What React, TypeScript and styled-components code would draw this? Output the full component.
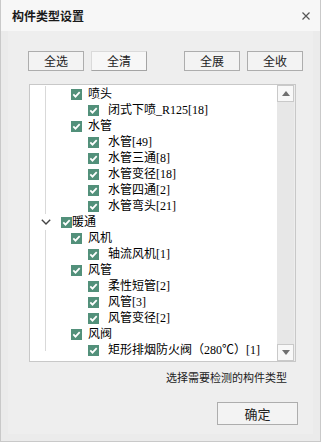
import styled, { createGlobalStyle } from 'styled-components';

interface TreeRow {
    level: 1 | 2 | 3;
    label: string;
    expander?: boolean;
    last?: boolean;
}

const rows: TreeRow[] = [
    { level: 2, label: '喷头' },
    { level: 3, label: '闭式下喷_R125[18]' },
    { level: 2, label: '水管' },
    { level: 3, label: '水管[49]' },
    { level: 3, label: '水管三通[8]' },
    { level: 3, label: '水管变径[18]' },
    { level: 3, label: '水管四通[2]' },
    { level: 3, label: '水管弯头[21]' },
    { level: 1, label: '暖通', expander: true },
    { level: 2, label: '风机' },
    { level: 3, label: '轴流风机[1]' },
    { level: 2, label: '风管' },
    { level: 3, label: '柔性短管[2]' },
    { level: 3, label: '风管[3]' },
    { level: 3, label: '风管变径[2]' },
    { level: 2, label: '风阀' },
    { level: 3, label: '矩形排烟防火阀（280℃）[1]', last: true },
];

// indent of the checkbox and gap to the label, per level
const indent = { 1: 0, 2: 10, 3: 27 };
const labelGap = { 1: 0, 2: 6, 3: 9 };

const GlobalStyle = createGlobalStyle`
    html, body {
        margin: 0;
        padding: 0;
        background: #ffffff;
    }
`;

const Window = styled.div`
    width: 321px;
    height: 442px;
    box-sizing: border-box;
    display: flex;
    flex-direction: column;
    background: #ebebeb;
    border: 1px solid #c9c9c9;
    border-top: none;
    font-family: "Noto Sans CJK SC", sans-serif;
`;

const TitleBar = styled.div`
    height: 31px;
    flex-shrink: 0;
    display: flex;
    align-items: center;
    justify-content: space-between;
    padding: 0 10px 0 11px;
    background: #f7f7f7;
`;

const Title = styled.div`
    font-size: 12px;
    font-weight: 700;
    color: #1a1a1a;
    line-height: 16px;
    margin-top: 1px;
`;

const CloseButton = styled.div`
    width: 8px;
    height: 8px;
    display: flex;
    margin-top: 1px;
`;

const Frame = styled.div`
    flex: 1;
    display: flex;
    padding: 0 7px 7px 7px;
`;

const Content = styled.div`
    flex: 1;
    display: flex;
    flex-direction: column;
    background: #eeeeee;
`;

const ButtonRow = styled.div`
    display: flex;
    margin: 20px 0 0 20px;
`;

const ButtonGroup = styled.div<{ $offset?: number }>`
    display: flex;
    gap: 7px;
    margin-left: ${p => p.$offset ?? 0}px;
`;

const ToolButton = styled.button<{ $focused?: boolean }>`
    width: 56px;
    height: 20px;
    padding: 0;
    box-sizing: border-box;
    border: 1px solid #adadad;
    border-color: ${p => p.$focused ? '#dadada #a4a4a4 #a4a4a4 #dadada' : '#adadad'};
    background: ${p => p.$focused ? '#f7f7f7' : '#f3f3f3'};
    font-family: "Noto Sans CJK SC", sans-serif;
    font-size: 12px;
    line-height: 18px;
    color: #222;
`;

const TreePanel = styled.div`
    margin: 13px 0 0 21px;
    width: 267px;
    height: 278px;
    box-sizing: border-box;
    display: flex;
    border: 1px solid #c8c8c8;
    background: #ffffff;
`;

const TreeBody = styled.div`
    flex: 1;
    padding-top: 1px;
    overflow: hidden;
`;

const Row = styled.div`
    height: 16px;
    display: flex;
    align-items: center;
    white-space: nowrap;
`;

const GuideCell = styled.div`
    width: 31px;
    height: 100%;
    flex-shrink: 0;
    display: flex;
    justify-content: center;
    align-items: center;
`;

const Rail = styled.div<{ $end?: boolean }>`
    width: 1px;
    align-self: flex-start;
    height: ${p => p.$end ? '9px' : '100%'};
    background: #d9d9d9;
`;

const Check = styled.svg<{ $level: 1 | 2 | 3 }>`
    width: 11px;
    height: 11px;
    flex-shrink: 0;
    margin-left: ${p => indent[p.$level]}px;
`;

const Label = styled.span<{ $level: 1 | 2 | 3 }>`
    margin-left: ${p => labelGap[p.$level]}px;
    font-family: "Liberation Serif", "Noto Sans CJK SC", serif;
    font-size: 12px;
    line-height: 16px;
    color: #000;
`;

const ScrollBar = styled.div`
    width: 18px;
    flex-shrink: 0;
    display: flex;
    flex-direction: column;
    justify-content: space-between;
    background: #e7e7e7;
    border-right: 1px solid #ededed;
    box-sizing: border-box;
`;

const ScrollButton = styled.div`
    height: 17px;
    box-sizing: border-box;
    display: flex;
    align-items: center;
    justify-content: center;
    border: 1px solid #c9c9c9;
    background: #f8f8f8;
`;

const Hint = styled.div`
    align-self: flex-end;
    margin: 8px 26px 0 0;
    font-size: 11px;
    line-height: 14px;
    color: #222;
`;

const OkButton = styled.button`
    align-self: flex-end;
    margin: 18px 15px 0 0;
    width: 81px;
    height: 23px;
    padding: 0;
    box-sizing: border-box;
    border: 1px solid #adadad;
    background: #f3f3f3;
    font-family: "Noto Sans CJK SC", sans-serif;
    font-size: 13px;
    line-height: 21px;
    color: #222;
`;

function CheckBox({ level }: { level: 1 | 2 | 3 }) {
    return (
        <Check $level={level} viewBox="0 0 11 11">
            <rect x="0" y="0" width="11" height="11" fill="#52907a" />
            <polyline points="2.3,5.4 4.5,7.6 8.7,3.2" fill="none" stroke="#ffffff" strokeWidth="1.8" />
        </Check>
    );
}

export default function App() {
    return (
        <>
            <GlobalStyle />
            <Window>
                <TitleBar>
                    <Title>构件类型设置</Title>
                    <CloseButton>
                        <svg width="8" height="8" viewBox="0 0 8 8">
                            <path d="M0.5 0.5 L7.5 7.5 M7.5 0.5 L0.5 7.5" stroke="#555" strokeWidth="1.2" />
                        </svg>
                    </CloseButton>
                </TitleBar>
                <Frame>
                    <Content>
                        <ButtonRow>
                            <ButtonGroup>
                                <ToolButton>全选</ToolButton>
                                <ToolButton $focused>全清</ToolButton>
                            </ButtonGroup>
                            <ButtonGroup $offset={37}>
                                <ToolButton>全展</ToolButton>
                                <ToolButton>全收</ToolButton>
                            </ButtonGroup>
                        </ButtonRow>

                        <TreePanel>
                            <TreeBody>
                                {rows.map(row => (
                                    <Row key={row.label}>
                                        <GuideCell>
                                            {row.expander ? (
                                                <svg width="10" height="6" viewBox="0 0 10 6">
                                                    <polyline points="0.8,0.8 5,5 9.2,0.8" fill="none" stroke="#444" strokeWidth="1.4" />
                                                </svg>
                                            ) : (
                                                <Rail $end={row.last} />
                                            )}
                                        </GuideCell>
                                        <CheckBox level={row.level} />
                                        <Label $level={row.level}>{row.label}</Label>
                                    </Row>
                                ))}
                            </TreeBody>
                            <ScrollBar>
                                <ScrollButton>
                                    <svg width="8" height="5" viewBox="0 0 8 5">
                                        <polygon points="0,5 8,5 4,0" fill="#707070" />
                                    </svg>
                                </ScrollButton>
                                <ScrollButton>
                                    <svg width="8" height="5" viewBox="0 0 8 5">
                                        <polygon points="0,0 8,0 4,5" fill="#707070" />
                                    </svg>
                                </ScrollButton>
                            </ScrollBar>
                        </TreePanel>

                        <Hint>选择需要检测的构件类型</Hint>
                        <OkButton>确定</OkButton>
                    </Content>
                </Frame>
            </Window>
        </>
    );
}
